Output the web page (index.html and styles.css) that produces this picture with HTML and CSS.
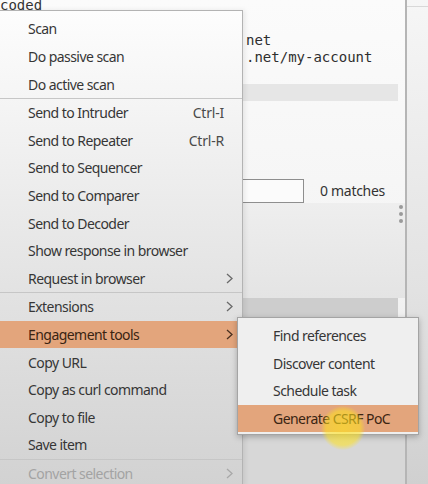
FILE: index.html
```html
<!DOCTYPE html>
<html>
<head>
<meta charset="utf-8">
<link rel="stylesheet" href="styles.css">
</head>
<body>
<div class="app">
  <div class="editor">
    <div class="code-top">coded</div>
    <div class="code-lines">
      <div class="code-line">net</div>
      <div class="code-line">.net/my-account</div>
    </div>
    <div class="bar bar-light"></div>
    <div class="search-row">
      <div class="search-input"></div>
      <div class="matches">0 matches</div>
    </div>
    <div class="response-area">
      <div class="dots"><span></span><span></span><span></span></div>
    </div>
    <div class="bar bar-dark"></div>
    <div class="bottom-area"></div>
  </div>
  <div class="divider"></div>
  <div class="side"><div class="side-top"></div></div>
</div>

<div class="menu">
  <div class="item">Scan</div>
  <div class="item">Do passive scan</div>
  <div class="item">Do active scan</div>
  <div class="sep"></div>
  <div class="item">Send to Intruder<span class="shortcut">Ctrl-I</span></div>
  <div class="item">Send to Repeater<span class="shortcut">Ctrl-R</span></div>
  <div class="item">Send to Sequencer</div>
  <div class="item">Send to Comparer</div>
  <div class="item">Send to Decoder</div>
  <div class="item">Show response in browser</div>
  <div class="item has-sub">Request in browser<svg class="chev" viewBox="0 0 7 11"><polyline points="1,1 6,5.5 1,10"/></svg></div>
  <div class="sep"></div>
  <div class="item has-sub">Extensions<svg class="chev" viewBox="0 0 7 11"><polyline points="1,1 6,5.5 1,10"/></svg></div>
  <div class="item has-sub active">Engagement tools<svg class="chev" viewBox="0 0 7 11"><polyline points="1,1 6,5.5 1,10"/></svg></div>
  <div class="item">Copy URL</div>
  <div class="item">Copy as curl command</div>
  <div class="item">Copy to file</div>
  <div class="item">Save item</div>
  <div class="sep"></div>
  <div class="item has-sub disabled">Convert selection<svg class="chev" viewBox="0 0 7 11"><polyline points="1,1 6,5.5 1,10"/></svg></div>
</div>

<div class="submenu">
  <div class="item sub-item">Find references</div>
  <div class="item sub-item">Discover content</div>
  <div class="item sub-item">Schedule task</div>
  <div class="item sub-item active">Generate CSRF PoC</div>
</div>

<div class="cursor-halo"></div>
</body>
</html>
```

FILE: styles.css
```css
html, body {
  margin: 0;
  padding: 0;
}
*, *::before, *::after {
  box-sizing: border-box;
}
body {
  width: 428px;
  height: 484px;
  overflow: hidden;
  position: relative;
  background: #f4f4f4;
  font-family: "Noto Sans", "Open Sans", sans-serif;
  color: #353535;
}
.app {
  display: flex;
  height: 484px;
}
.editor {
  width: 405px;
  display: flex;
  flex-direction: column;
  background: linear-gradient(#fbfbfb, #f3f3f3 60%, #dadada);
}
.code-top {
  font-family: "DejaVu Sans Mono", monospace;
  font-size: 14px;
  line-height: 10px;
  height: 10px;
  color: #333;
  white-space: pre;
}
.code-lines {
  padding: 21.5px 0 0 246px;
  height: 74px;
  font-family: "DejaVu Sans Mono", monospace;
  font-size: 14px;
  line-height: 17px;
  color: #2e2e2e;
}
.code-line {
  white-space: pre;
}
.bar {
  margin-right: 7px;
}
.bar-light {
  height: 17px;
  background: #e6e6e6;
}
.search-row {
  height: 102px;
  display: flex;
  align-items: flex-end;
  gap: 16px;
}
.search-input {
  margin-left: 200px;
  width: 104px;
  height: 24px;
  border: 1.5px solid #8e8e8e;
  background: #fbfbfb;
}
.matches {
  font-size: 14px;
  line-height: 24px;
  letter-spacing: -0.3px;
  color: #333;
}
.response-area {
  height: 95px;
  display: flex;
  justify-content: flex-end;
  padding-right: 2px;
  background: linear-gradient(#eeeeee, #e4e4e4);
}
.dots {
  display: flex;
  flex-direction: column;
  gap: 3px;
  padding-top: 2px;
}
.dots span {
  width: 4px;
  height: 4px;
  border-radius: 50%;
  background: #9a9a9a;
}
.bar-dark {
  height: 22px;
  background: #cdcdcd;
}
.bottom-area {
  flex: 1;
  background: #d7d7d7;
}
.divider {
  width: 2px;
  background: #b5b5b5;
}
.side {
  flex: 1;
  background: linear-gradient(#f6f6f6, #e2e2e2 60%, #d0d0d0);
}
.side-top {
  height: 7px;
  border-bottom: 1px solid #d8d8d8;
}

/* menus */
.menu {
  position: absolute;
  left: 0;
  top: 10px;
  width: 243px;
  padding-top: 4.2px;
  border-top: 1px solid #b3b3b3;
  border-right: 1px solid #b3b3b3;
  background: linear-gradient(#fdfdfd, #f2f2f2 25%, #e2e2e2 60%, #d2d2d2);
  box-shadow: 2px 0 5px rgba(0,0,0,0.08);
}
.item {
  height: 27.6px;
  display: flex;
  align-items: center;
  padding-left: 28px;
  padding-right: 18px;
  font-size: 14px;
  letter-spacing: -0.55px;
  white-space: nowrap;
  color: #363636;
}
.shortcut {
  margin-left: auto;
  color: #4a4a4a;
  letter-spacing: -0.2px;
}
.item.has-sub {
  padding-right: 9px;
}
.chev {
  margin-left: auto;
  width: 7px;
  height: 11px;
  fill: none;
  stroke: #6a6a6a;
  stroke-width: 1.3;
}
.item.active {
  background: #e3a57c;
  color: #3a2412;
}
.item.active .chev {
  stroke: #4a3020;
}
.item.disabled {
  color: #a3a3a3;
}
.item.disabled .chev {
  stroke: #a8a8a8;
}
.sep {
  height: 1px;
  background: #c6c6c6;
}

.submenu {
  position: absolute;
  left: 237px;
  top: 317px;
  width: 182px;
  padding: 4px 0 2px;
  border: 1px solid #a4a4a4;
  background: #efefef;
  box-shadow: 0 2px 6px rgba(0,0,0,0.25);
}
.sub-item {
  height: 27.5px;
  padding-left: 35px;
}

.cursor-halo {
  position: absolute;
  left: 321px;
  top: 406px;
  width: 44px;
  height: 44px;
  border-radius: 50%;
  background: radial-gradient(circle, rgba(255,226,30,0.65) 0%, rgba(255,226,30,0.55) 55%, rgba(255,226,30,0) 72%);
}
```
